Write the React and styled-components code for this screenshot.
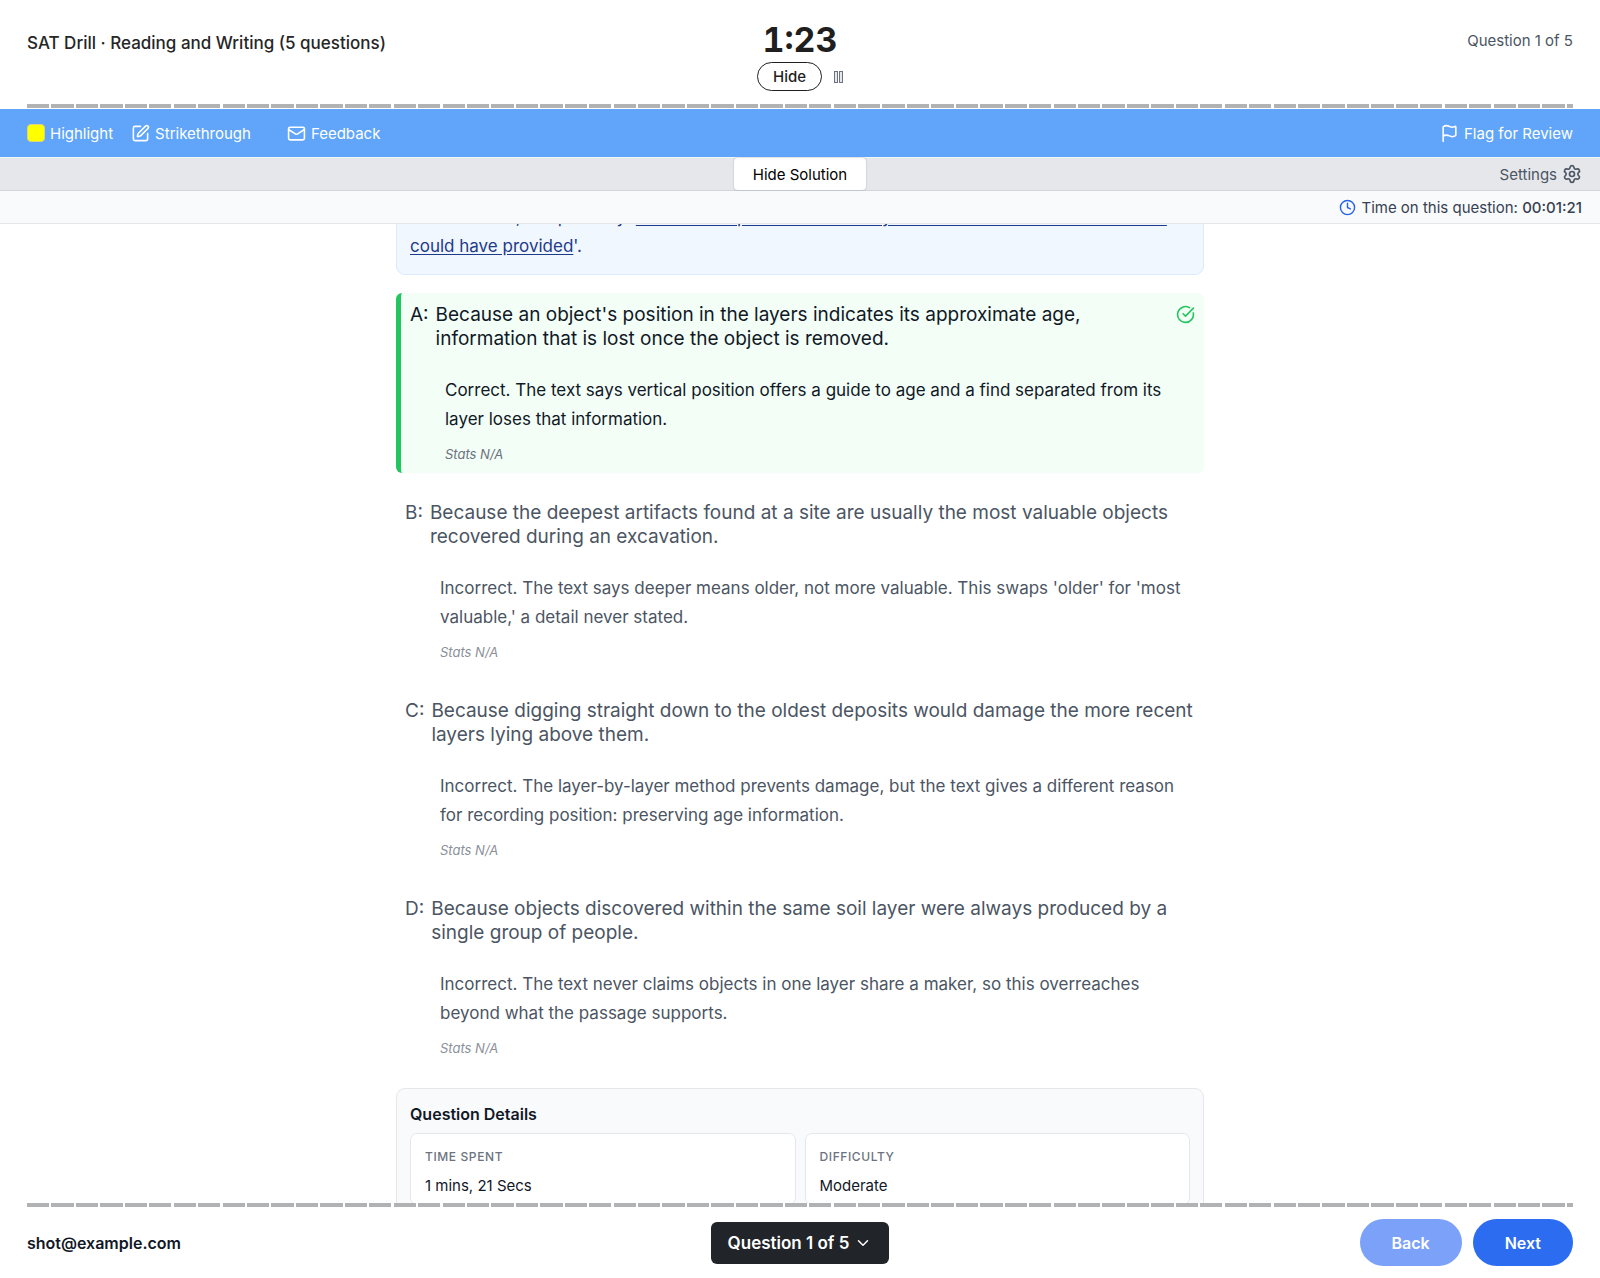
import React, { useLayoutEffect, useRef } from 'react';
import styled, { createGlobalStyle } from 'styled-components';
import {
  ChevronDown,
  CircleCheckBig,
  Clock,
  Flag,
  Mail,
  Settings,
  SquarePen,
} from 'lucide-react';

const GlobalStyle = createGlobalStyle`
  * {
    box-sizing: border-box;
  }

  body {
    margin: 0;
    background: #ffffff;
    color: #111827;
    font-family: Inter, 'Liberation Sans', sans-serif;
    font-size: 15px;
  }

  button {
    padding: 0;
    border: 0;
    background: none;
    color: inherit;
    font: inherit;
    cursor: pointer;
  }

  h1, h2, p, dl, dd {
    margin: 0;
  }
`;

const Page = styled.div`
  display: flex;
  flex-direction: column;
  height: 100vh;
`;

const Header = styled.header`
  display: grid;
  grid-template-columns: 1fr auto 1fr;
  align-items: start;
  height: 104px;
  padding: 20px 27px 0;
`;

const Title = styled.h1`
  padding-top: 11px;
  color: #262626;
  font-size: 17px;
  font-weight: 500;
  line-height: 24px;
`;

const Progress = styled.p`
  padding-top: 9px;
  color: #4b5563;
  line-height: 24px;
  text-align: right;
`;

const Timer = styled.div`
  display: flex;
  flex-direction: column;
  align-items: center;
`;

const Time = styled.div`
  color: #1f1f1f;
  font-size: 34px;
  font-variant-numeric: tabular-nums;
  font-weight: 700;
  line-height: 40px;
`;

const TimerControls = styled.div`
  display: flex;
  align-items: center;
  gap: 12px;
  padding-top: 2px;
`;

const HideButton = styled.button`
  height: 29px;
  padding: 0 15px;
  border: 1px solid #1f1f1f;
  border-radius: 15px;
  color: #1f1f1f;
  font-weight: 500;
`;

const PauseButton = styled.button`
  display: flex;
`;

const Dashes = styled.div`
  flex-shrink: 0;
  height: 4px;
  margin: 0 27px;
  background: repeating-linear-gradient(
    to right,
    #b0b2b4 0 1.44%,
    transparent 1.44% 1.581%
  );
`;

const Toolbar = styled.div`
  display: flex;
  flex-shrink: 0;
  align-items: center;
  height: 49px;
  margin-top: 1px;
  padding: 0 27px;
  border-bottom: 1px solid #f3f4f6;
  background: #60a5fa;
  color: #ffffff;
`;

const Tool = styled.button`
  display: flex;
  align-items: center;
  gap: 5px;
  margin-right: ${props => props.$space || '0'};
  margin-left: ${props => (props.$end ? 'auto' : '0')};
`;

const Swatch = styled.span`
  width: 18px;
  height: 18px;
  border: 1px solid #d9d77a;
  border-radius: 4px;
  background: #ffff00;
`;

const SolutionBar = styled.div`
  display: grid;
  flex-shrink: 0;
  grid-template-columns: 1fr auto 1fr;
  height: 33px;
  padding: 0 18px;
  border-bottom: 1px solid #d1d5db;
  background: #e5e7eb;
`;

const SolutionButton = styled.button`
  grid-column: 2;
  padding: 0 19px;
  border-radius: 4px;
  background: #ffffff;
  box-shadow: 0 0 2px rgba(0, 0, 0, 0.25);
  color: #000000;
`;

const SettingsButton = styled.button`
  display: flex;
  align-items: center;
  justify-self: end;
  gap: 5px;
  color: #4b5563;
`;

const TimeBar = styled.div`
  display: flex;
  flex-shrink: 0;
  align-items: center;
  justify-content: flex-end;
  gap: 5px;
  height: 33px;
  padding: 0 18px;
  border-bottom: 1px solid #e5e7eb;
  background: #f9fafb;
  color: #374151;

  strong {
    font-weight: 500;
  }
`;

const Scroller = styled.main`
  flex: 1;
  min-height: 0;
  overflow-y: auto;
  scrollbar-width: none;
`;

const Content = styled.div`
  max-width: 808px;
  margin: 0 auto;
  padding-bottom: 40px;
`;

const Hint = styled.p`
  margin-bottom: 18px;
  padding: 13px;
  border: 1px solid #dbeafe;
  border-radius: 9px;
  background: #f0f7ff;
  color: #1e3a8a;
  font-size: 17px;
  line-height: 29px;

  u {
    text-underline-offset: 2px;
  }
`;

const Answer = styled.section`
  margin-bottom: 18px;
  padding: 10px 9px 9px;
  border-left: ${props => (props.$correct ? '5px solid #22c55e' : '0')};
  border-radius: 6px;
  background: ${props => (props.$correct ? '#f3fef6' : 'transparent')};
  color: ${props => (props.$correct ? '#111827' : '#4b5563')};
`;

const Choice = styled.div`
  display: flex;
  gap: 7px;
  font-size: 19px;
  line-height: 24px;

  p {
    flex: 1;
  }

  svg {
    flex-shrink: 0;
    margin-top: 2px;
    color: #22c55e;
  }
`;

const Explanation = styled.p`
  padding: 25px 0 11px 35px;
  font-size: 17px;
  line-height: 29px;
`;

const Stats = styled.p`
  padding-left: 35px;
  color: ${props => (props.$correct ? '#6b7280' : '#8b909a')};
  font-size: 13px;
  font-style: italic;
  line-height: 19px;
`;

const Details = styled.section`
  margin-top: 21px;
  padding: 13px;
  border: 1px solid #e5e7eb;
  border-radius: 9px;
  background: #f9fafb;
`;

const DetailsTitle = styled.h2`
  font-size: 16px;
  font-weight: 600;
  line-height: 24px;
`;

const DetailsGrid = styled.dl`
  display: grid;
  grid-template-columns: 1fr 1fr;
  gap: 9px;
  padding-top: 7px;
`;

const Detail = styled.div`
  padding: 14px 14px 6px;
  border: 1px solid #e5e7eb;
  border-radius: 7px;
  background: #ffffff;

  dt {
    color: #6b7280;
    font-size: 12px;
    font-weight: 500;
    letter-spacing: 0.05em;
    line-height: 18px;
    text-transform: uppercase;
  }

  dd {
    padding-top: 8px;
    line-height: 24px;
  }
`;

const Footer = styled.footer`
  display: grid;
  flex-shrink: 0;
  grid-template-columns: 1fr auto 1fr;
  align-items: center;
  height: 71px;
  padding: 0 27px;
  font-size: 16px;
  font-weight: 600;
`;

const QuestionMenu = styled.button`
  display: flex;
  align-items: center;
  gap: 5px;
  height: 42px;
  padding: 0 17px;
  border-radius: 6px;
  background: #212529;
  color: #ffffff;
  font-size: 17px;
`;

const Actions = styled.div`
  display: flex;
  justify-content: flex-end;
  gap: 11px;
`;

const NavButton = styled.button`
  height: 47px;
  padding: 0 32px;
  border-radius: 24px;
  background: #2b6cf0;
  color: #ffffff;

  &:disabled {
    background: #7ca1f8;
    cursor: default;
  }
`;

const answers = [
  {
    letter: 'A',
    correct: true,
    text: "Because an object's position in the layers indicates its approximate age, information that is lost once the object is removed.",
    explanation:
      'Correct. The text says vertical position offers a guide to age and a find separated from its layer loses that information.',
  },
  {
    letter: 'B',
    text: 'Because the deepest artifacts found at a site are usually the most valuable objects recovered during an excavation.',
    explanation:
      "Incorrect. The text says deeper means older, not more valuable. This swaps 'older' for 'most valuable,' a detail never stated.",
  },
  {
    letter: 'C',
    text: 'Because digging straight down to the oldest deposits would damage the more recent layers lying above them.',
    explanation:
      'Incorrect. The layer-by-layer method prevents damage, but the text gives a different reason for recording position: preserving age information.',
  },
  {
    letter: 'D',
    text: 'Because objects discovered within the same soil layer were always produced by a single group of people.',
    explanation:
      'Incorrect. The text never claims objects in one layer share a maker, so this overreaches beyond what the passage supports.',
  },
];

const PauseIcon = () => (
  <svg width="9" height="12" viewBox="0 0 9 12" fill="#e5e7eb" stroke="#6b7280">
    <rect x="0.5" y="0.5" width="3" height="11" />
    <rect x="5.5" y="0.5" width="3" height="11" />
  </svg>
);

export default function App() {
  const scroller = useRef(null);

  // open the solution with the answers in view
  useLayoutEffect(() => {
    scroller.current.scrollTop = 35;
  }, []);

  return (
    <Page>
      <GlobalStyle />
      <Header>
        <Title>SAT Drill · Reading and Writing (5 questions)</Title>
        <Timer>
          <Time>1:23</Time>
          <TimerControls>
            <HideButton>Hide</HideButton>
            <PauseButton aria-label="Pause">
              <PauseIcon />
            </PauseButton>
          </TimerControls>
        </Timer>
        <Progress>Question 1 of 5</Progress>
      </Header>
      <Dashes />
      <Toolbar>
        <Tool $space="18px">
          <Swatch />
          Highlight
        </Tool>
        <Tool $space="36px">
          <SquarePen size={19} />
          Strikethrough
        </Tool>
        <Tool>
          <Mail size={19} />
          Feedback
        </Tool>
        <Tool $end>
          <Flag size={19} />
          Flag for Review
        </Tool>
      </Toolbar>
      <SolutionBar>
        <SolutionButton>Hide Solution</SolutionButton>
        <SettingsButton>
          Settings
          <Settings size={20} />
        </SettingsButton>
      </SolutionBar>
      <TimeBar>
        <Clock size={17} color="#2563eb" />
        <span>
          Time on this question: <strong>00:01:21</strong>
        </span>
      </TimeBar>
      <Scroller ref={scroller}>
        <Content>
          <Hint>
            When moved, it is past any &apos;
            <u>
              evidence its position in each layer of the sediment at their
              location could have provided
            </u>
            &apos;.
          </Hint>
          {answers.map(answer => (
            <Answer $correct={answer.correct} key={answer.letter}>
              <Choice>
                <span>{answer.letter}:</span>
                <p>{answer.text}</p>
                {answer.correct && <CircleCheckBig size={19} />}
              </Choice>
              <Explanation>{answer.explanation}</Explanation>
              <Stats $correct={answer.correct}>Stats N/A</Stats>
            </Answer>
          ))}
          <Details>
            <DetailsTitle>Question Details</DetailsTitle>
            <DetailsGrid>
              <Detail>
                <dt>Time Spent</dt>
                <dd>1 mins, 21 Secs</dd>
              </Detail>
              <Detail>
                <dt>Difficulty</dt>
                <dd>Moderate</dd>
              </Detail>
            </DetailsGrid>
          </Details>
        </Content>
      </Scroller>
      <Dashes />
      <Footer>
        <span>shot@example.com</span>
        <QuestionMenu>
          Question 1 of 5
          <ChevronDown size={18} />
        </QuestionMenu>
        <Actions>
          <NavButton disabled>Back</NavButton>
          <NavButton>Next</NavButton>
        </Actions>
      </Footer>
    </Page>
  );
}
